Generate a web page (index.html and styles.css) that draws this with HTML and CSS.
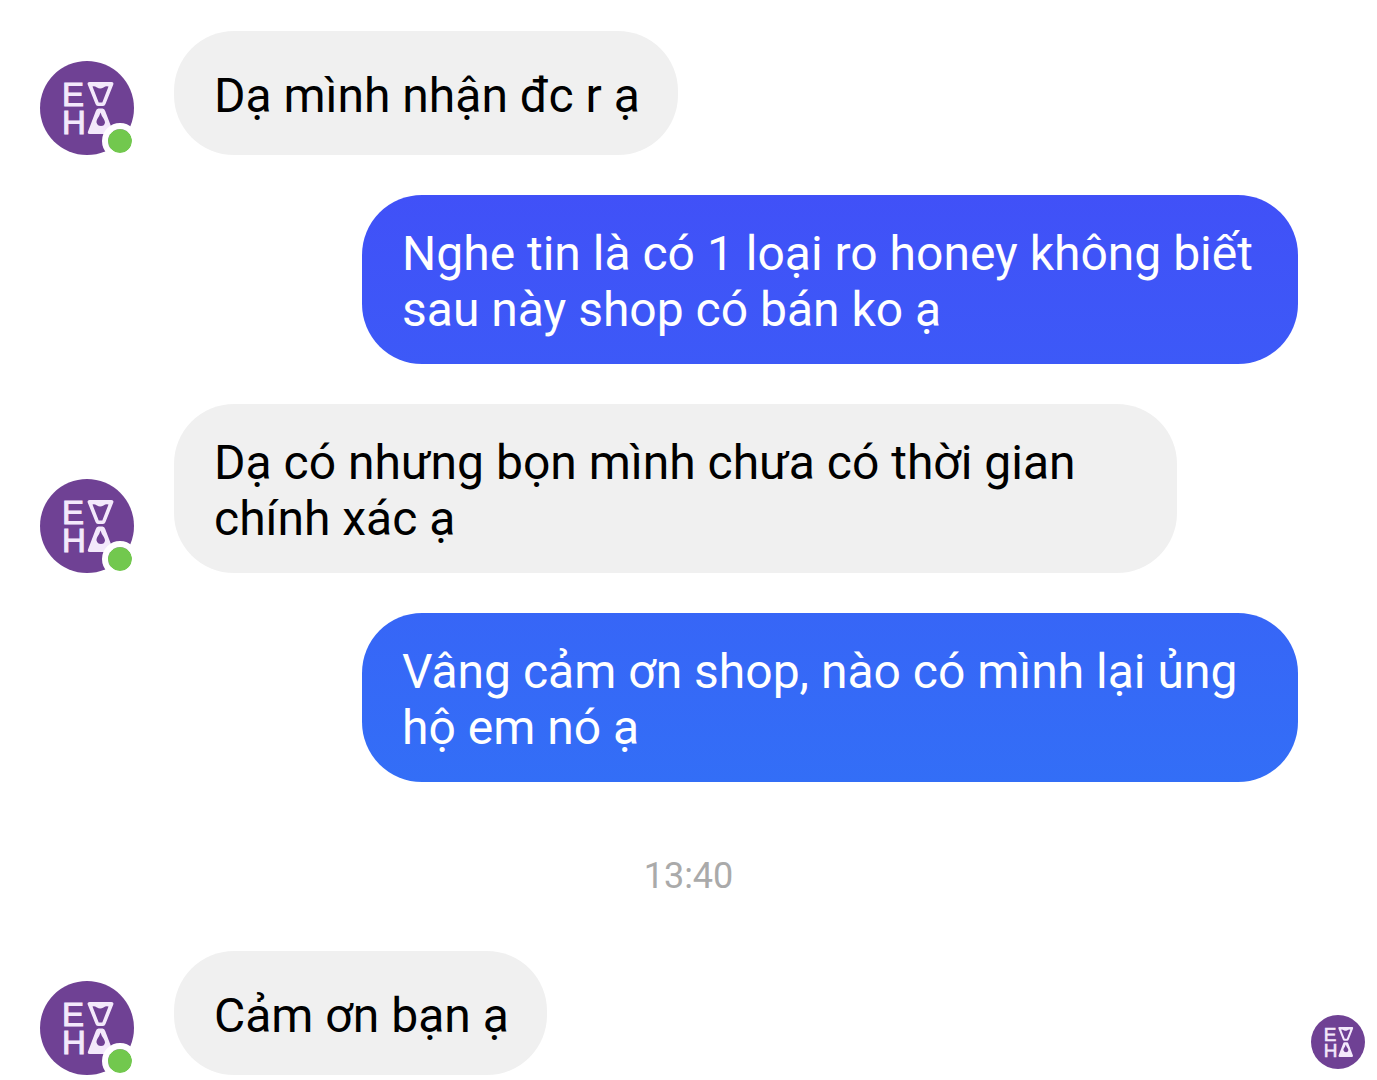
FILE: index.html
```
<!DOCTYPE html>
<html lang="vi">
<head>
    <meta charset="UTF-8">
    <meta name="viewport" content="width=device-width, initial-scale=1.0">
    <title>Chat</title>
    <link rel="stylesheet" href="styles.css">
</head>
<body>
    <!-- Shared EVHA logo -->
    <svg class="sprite" aria-hidden="true">
        <symbol id="logo" viewBox="0 0 94 94">
            <circle cx="47" cy="47" r="47" fill="#6f4194"/>
            <g fill="#f3e9fb">
                <text class="logo-text" x="22" y="44.500">E</text>
                <text class="logo-text" x="22" y="73">H</text>
                <path fill-rule="evenodd" d="M49.500 21H71.500Q74 21 73.300 23.500L65.500 43Q64.800 45 63 45H58Q56.200 45 55.500 43L47.700 23.500Q47 21 49.500 21ZM52.500 25.500L58.700 41.500H62.300L68.500 25.500Q66 24.500 63.500 26.500Q60 28.500 57 26.500Q54 24.500 52.500 25.500Z"/>
                <path fill-rule="evenodd" d="M58.500 47.500H62.500Q64.500 47.500 65.200 50L73 70.500Q73.800 73 71.300 73H49.700Q47.200 73 48 70.500L55.800 50Q56.500 47.500 58.500 47.500ZM60.500 51.500Q59.500 55 57.300 58Q56.200 60 56.500 61.500Q57.500 65 61 65Q64.500 65 65 61.500Q65 60 63.800 58Q61.500 55 60.500 51.500Z"/>
            </g>
        </symbol>
    </svg>

    <main class="chat">
        <div class="row incoming">
            <div class="avatar">
                <svg role="img" aria-label="EVHA"><use href="#logo"/></svg>
                <span class="online"></span>
            </div>
            <p class="bubble">Dạ mình nhận đc r ạ</p>
        </div>

        <div class="row outgoing">
            <p class="bubble">Nghe tin là có 1 loại ro honey không biết sau này shop có bán ko ạ</p>
        </div>

        <div class="row incoming">
            <div class="avatar">
                <svg role="img" aria-label="EVHA"><use href="#logo"/></svg>
                <span class="online"></span>
            </div>
            <p class="bubble">Dạ có nhưng bọn mình chưa có thời gian chính xác ạ</p>
        </div>

        <div class="row outgoing">
            <p class="bubble">Vâng cảm ơn shop, nào có mình lại ủng hộ em nó ạ</p>
        </div>

        <time class="time">13:40</time>

        <div class="row last">
            <div class="avatar">
                <svg role="img" aria-label="EVHA"><use href="#logo"/></svg>
                <span class="online"></span>
            </div>
            <p class="bubble">Cảm ơn bạn ạ</p>
            <!-- Read receipt -->
            <svg class="seen" role="img" aria-label="EVHA"><use href="#logo"/></svg>
        </div>
    </main>
</body>
</html>
```
FILE: styles.css
```
* {
    margin: 0;
    padding: 0;
    box-sizing: border-box;
}

body {
    font-family: Roboto, "Liberation Sans", sans-serif;
    background-color: #fff;
    color: #000;
}

.sprite {
    display: none;
}

.logo-text {
    font-family: "Liberation Sans", sans-serif;
    font-size: 33px;
    stroke: #f3e9fb;
    stroke-width: 1px;
}

.chat {
    display: flex;
    flex-direction: column;
    gap: 40px;
    padding: 31px 12px 4px 40px;
}

/* Message rows */
.row {
    display: flex;
    align-items: flex-end;
    gap: 40px;
}

.incoming {
    padding-right: 188px;
}

.outgoing {
    justify-content: flex-end;
    padding-left: 322px;
    padding-right: 67px;
}

.bubble {
    display: flex;
    align-items: center;
    min-height: 124px;
    padding: 31px 38px 26px 40px;
    border-radius: 60px;
    background-color: #f0f0f0;
    font-size: 48px;
    line-height: 56px;
}

/* The gradient runs over the whole window, each bubble shows its part */
.outgoing .bubble {
    background: linear-gradient(#4547f8, #2c7df6) fixed;
    color: #fff;
}

/* Avatar */
.avatar {
    position: relative;
    flex: none;
    width: 94px;
    height: 94px;
}

.avatar svg {
    display: block;
    width: 100%;
    height: 100%;
}

.online {
    position: absolute;
    right: -4px;
    bottom: -4px;
    width: 36px;
    height: 36px;
    border: 6px solid #fff;
    border-radius: 50%;
    background-color: #72c84e;
    background-clip: padding-box;
}

.time {
    padding: 33px 0 14px;
    margin-right: -12px;
    margin-left: -40px;
    color: #aaa;
    font-size: 36px;
    line-height: 42px;
    text-align: center;
}

.seen {
    flex: none;
    width: 54px;
    height: 54px;
    margin-left: auto;
    margin-bottom: 6px;
}
```
